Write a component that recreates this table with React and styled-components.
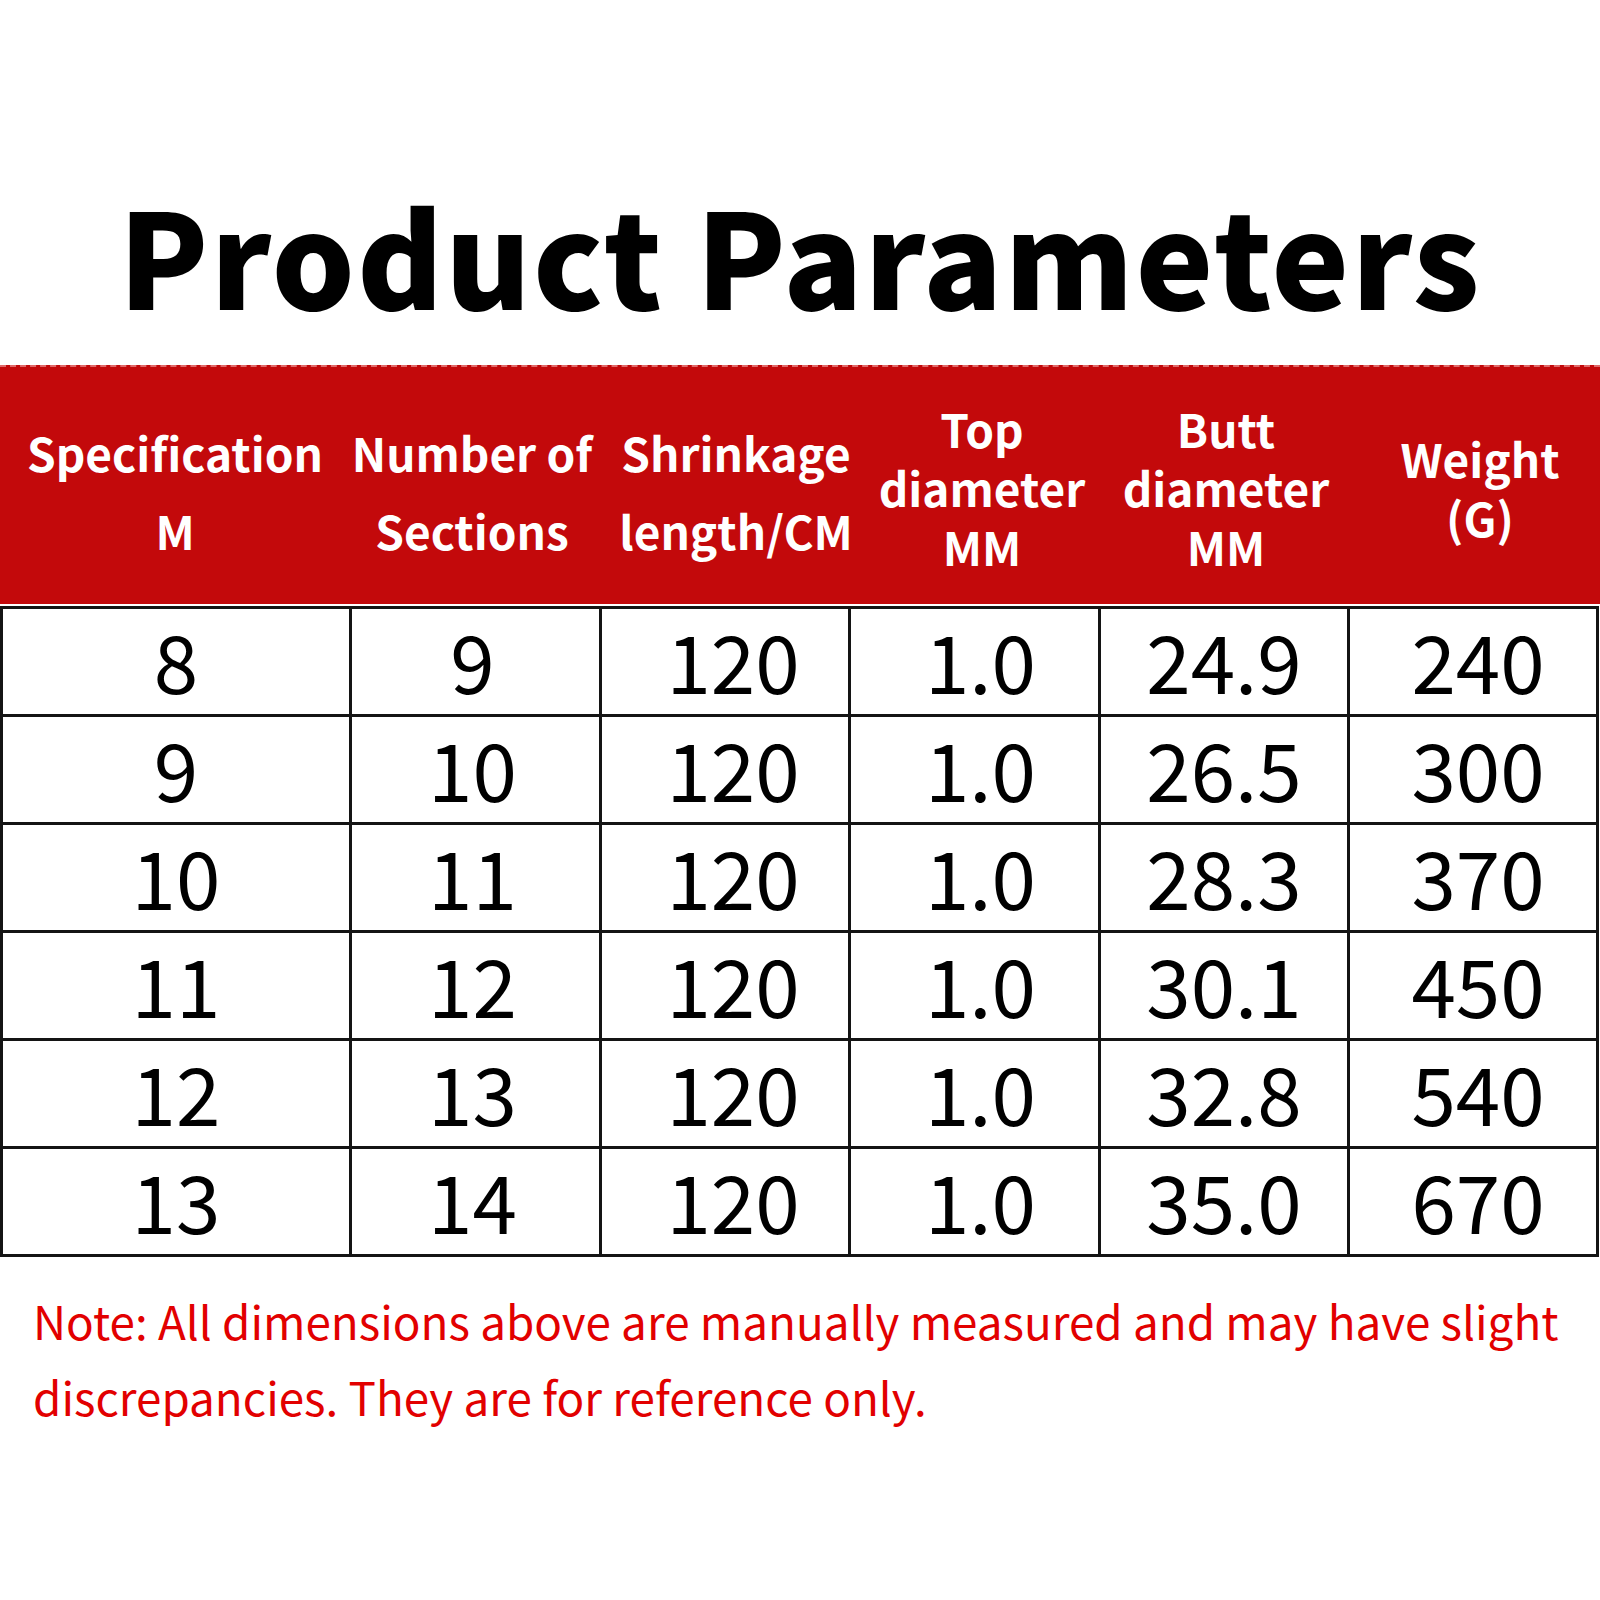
import React from 'react'
import styled, { createGlobalStyle } from 'styled-components'

const GlobalStyle = createGlobalStyle`
  html, body {
    margin: 0;
    padding: 0;
    background: #fff;
  }
  body {
    font-family: "Noto Sans CJK SC", "Noto Sans", sans-serif;
  }
`

const Page = styled.div`
  width: 1600px;
  height: 1600px;
  background: #fff;
  overflow: hidden;
`

const Title = styled.h1`
  margin: 0;
  padding-top: 188px;
  height: 365px;
  box-sizing: border-box;
  text-align: center;
  font-size: 131px;
  line-height: 131px;
  font-weight: 900;
  color: #000;
  letter-spacing: 2px;
`

const Header = styled.div`
  display: grid;
  grid-template-columns: 350px 244px 284px 208px 280px 228px;
  height: 239px;
  background: #c3090b;
  border-top: 2px dashed #e06a6a;
  box-sizing: border-box;
  color: #fff;
  font-weight: 700;
  font-size: 46px;
`

const HeadCell = styled.div`
  display: flex;
  align-items: center;
  justify-content: center;
  text-align: center;
  white-space: nowrap;
  line-height: ${({ $tight }) => ($tight ? '59px' : '78px')};
  padding-top: ${({ $tight }) => ($tight ? '4px' : '10px')};
`

const Grid = styled.div`
  display: grid;
  width: 1599px;
  margin-top: 2px;
  grid-template-columns: 346px 247px 246px 247px 246px 246px;
  grid-auto-rows: 105px;
  gap: 3px;
  padding: 3px;
  box-sizing: border-box;
  background: #141414;
`

const Cell = styled.div`
  background: #fff;
  display: flex;
  align-items: center;
  justify-content: center;
  font-size: 80px;
  font-weight: 400;
  color: #000;
  padding-bottom: 6px;
  padding-left: ${({ $shift }) => Math.max($shift, 0) * 2}px;
  padding-right: ${({ $shift }) => Math.max(-$shift, 0) * 2}px;
`

const Note = styled.p`
  margin: 0;
  padding: 25px 0 0 33px;
  color: #e20000;
  font-size: 45.8px;
  line-height: 76px;
  font-weight: 400;
`

const headers = [
  { lines: ['Specification', 'M'] },
  { lines: ['Number of', 'Sections'] },
  { lines: ['Shrinkage', 'length/CM'] },
  { lines: ['Top', 'diameter', 'MM'], tight: true },
  { lines: ['Butt', 'diameter', 'MM'], tight: true },
  { lines: ['Weight', '(G)'], tight: true }
]

// the reference centres some columns a little off the cell middle
const shifts = [0, -3, 8, 6, 0, 5]

const rows = [
  ['8', '9', '120', '1.0', '24.9', '240'],
  ['9', '10', '120', '1.0', '26.5', '300'],
  ['10', '11', '120', '1.0', '28.3', '370'],
  ['11', '12', '120', '1.0', '30.1', '450'],
  ['12', '13', '120', '1.0', '32.8', '540'],
  ['13', '14', '120', '1.0', '35.0', '670']
]

export default function App () {
  return (
    <Page>
      <GlobalStyle />
      <Title>Product Parameters</Title>
      <Header>
        {headers.map(({ lines, tight }, i) => (
          <HeadCell key={i} $tight={tight}>
            <div>
              {lines.map((l, j) => (
                <div key={j}>{l}</div>
              ))}
            </div>
          </HeadCell>
        ))}
      </Header>
      <Grid>
        {rows.map((row, r) =>
          row.map((v, c) => (
            <Cell key={`${r}-${c}`} $shift={shifts[c]}>{v}</Cell>
          ))
        )}
      </Grid>
      <Note>
        Note: All dimensions above are manually measured and may have slight
        <br />
        discrepancies. They are for reference only.
      </Note>
    </Page>
  )
}
